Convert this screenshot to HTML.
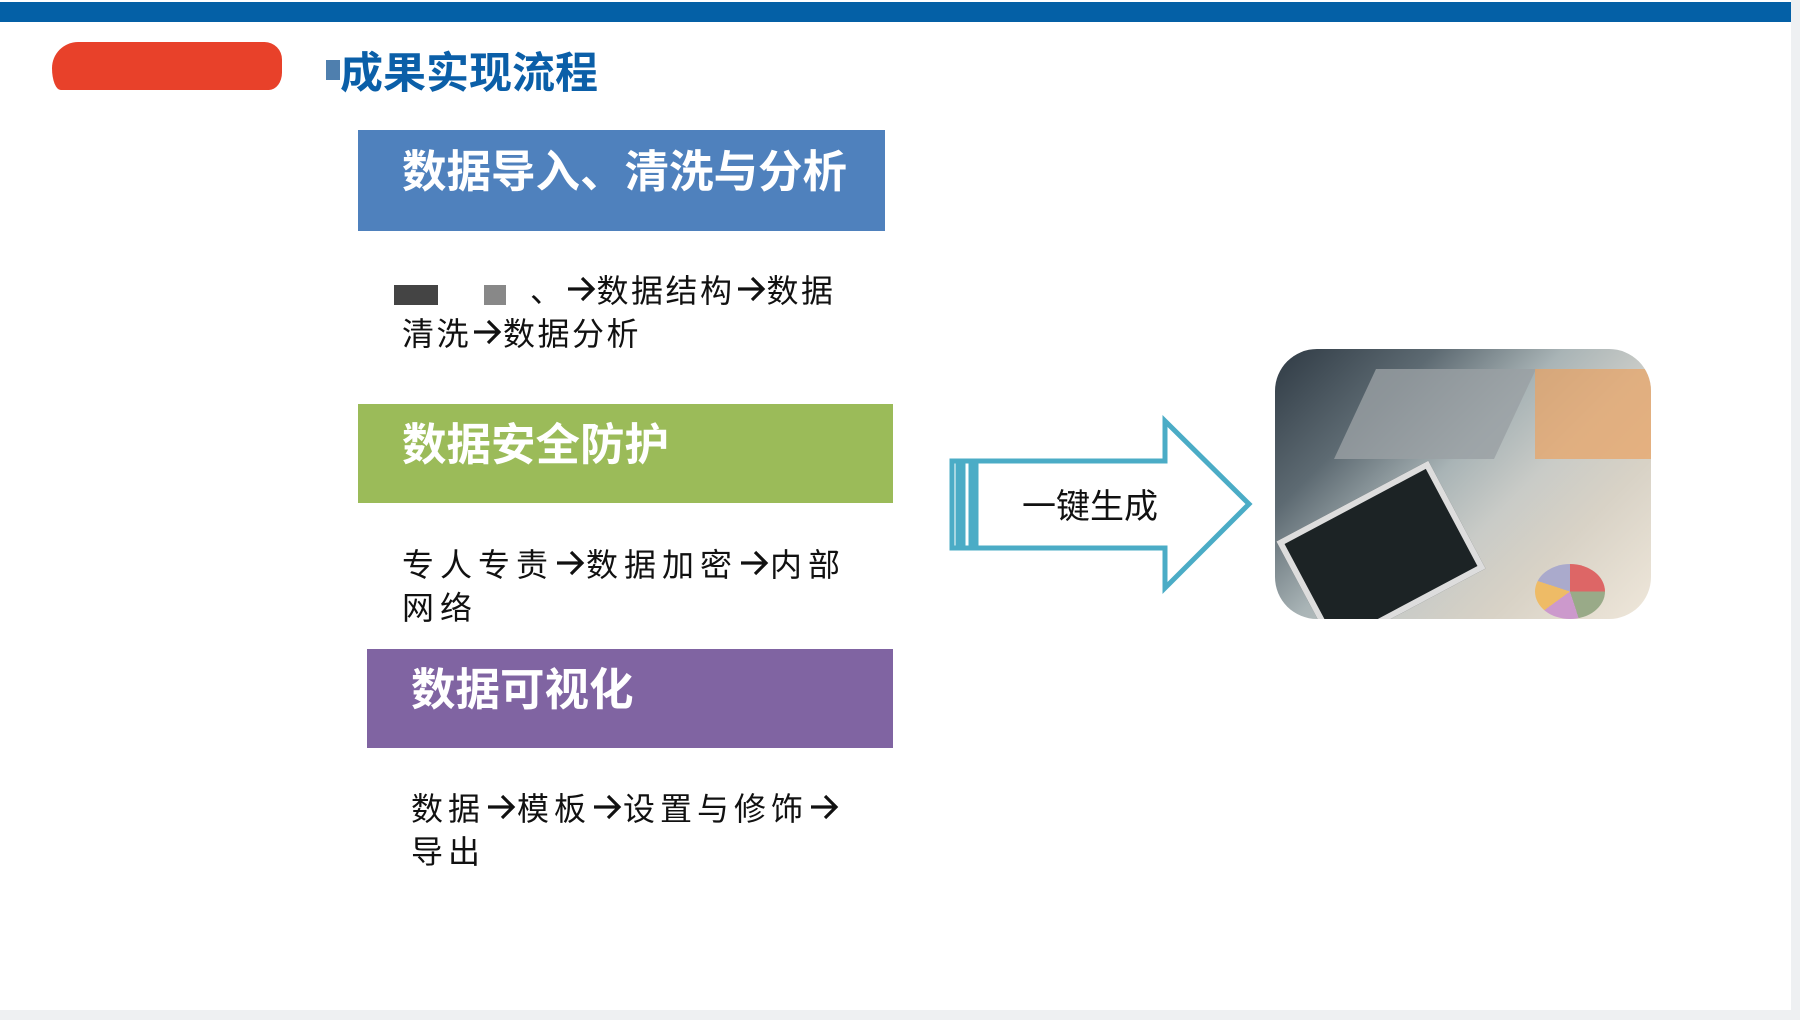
<!DOCTYPE html>
<html><head><meta charset="utf-8"><style>
*{margin:0;padding:0}
body{width:1800px;height:1020px;background:#fff;position:relative;overflow:hidden;font-family:"Liberation Sans","Noto Sans CJK SC",sans-serif}
.a{position:absolute;white-space:nowrap}
.box{position:absolute}
.bt{position:absolute;color:#fff;font-weight:bold;font-size:44.5px;line-height:1;font-family:"Noto Sans CJK SC",sans-serif}
.t{position:absolute;color:#111;font-size:32px;line-height:43px;white-space:nowrap;font-family:"Noto Sans CJK SC",sans-serif}
.ar{display:inline-block;width:1em;height:1em;vertical-align:-0.1em}
</style></head><body>
<svg width="0" height="0" style="position:absolute"><defs><symbol id="ar" viewBox="0 0 32 32"><path d="M3 16H28M17 5L28 16L17 27" fill="none" stroke="#111" stroke-width="3.2"/></symbol></defs></svg>
<div class="box" style="left:0;top:2px;width:1800px;height:20px;background:#0460a6"></div>
<div class="box" style="left:1791px;top:0;width:9px;height:1020px;background:#eef0f2"></div>
<div class="box" style="left:0;top:1010px;width:1800px;height:10px;background:#eef0f2"></div>
<div class="box" style="left:52px;top:42px;width:230px;height:48px;background:#e8412a;border-radius:30px 20px 15px 10px/30px 20px 20px 25px"></div>
<div class="box" style="left:326px;top:60px;width:14px;height:20px;background:#4f7fae"></div>
<div class="a" style="left:340px;top:40px;font-size:43px;font-weight:bold;color:#0b5fa8;font-family:'Noto Sans CJK SC',sans-serif;line-height:60px">成果实现流程</div>

<div class="box" style="left:358px;top:130px;width:527px;height:101px;background:#4f81bd"></div>
<div class="bt" style="left:402px;top:146px">数据导入、清洗与分析</div>
<div class="box" style="left:394px;top:285px;width:44px;height:20px;background:#444"></div>
<div class="box" style="left:484px;top:285px;width:22px;height:20px;background:#888"></div>
<div class="t" style="left:402px;top:268px;letter-spacing:2.5px"><span style="margin-left:128px">、<svg class="ar"><use href="#ar"/></svg>数据结构<svg class="ar"><use href="#ar"/></svg>数据</span><br>清洗<svg class="ar"><use href="#ar"/></svg>数据分析</div>

<div class="box" style="left:358px;top:404px;width:535px;height:99px;background:#9bbb59"></div>
<div class="bt" style="left:402px;top:419px">数据安全防护</div>
<div class="t" style="left:402px;top:542px;letter-spacing:6px">专人专责<svg class="ar"><use href="#ar"/></svg>数据加密<svg class="ar"><use href="#ar"/></svg>内部<br>网络</div>

<div class="box" style="left:367px;top:649px;width:526px;height:99px;background:#8064a2"></div>
<div class="bt" style="left:411px;top:664px">数据可视化</div>
<div class="t" style="left:411px;top:786px;letter-spacing:5px">数据<svg class="ar"><use href="#ar"/></svg>模板<svg class="ar"><use href="#ar"/></svg>设置与修饰<svg class="ar"><use href="#ar"/></svg><br>导出</div>

<svg class="box" style="left:940px;top:410px" width="320" height="190" viewBox="940 410 320 190">
<g fill="none" stroke="#4bacc6" stroke-width="5" stroke-linejoin="miter">
<rect x="952" y="461" width="6" height="87"/>
<rect x="963" y="461" width="8" height="87"/>
<path d="M976 461 H1165 V421 L1249 504 L1165 588 V548 H976 Z"/>
</g>
</svg>
<div class="a" style="left:1022px;top:479px;font-size:34px;color:#111;font-family:'Noto Sans CJK SC',sans-serif">一键生成</div>

<div class="box" style="left:1275px;top:349px;width:376px;height:270px;border-radius:42px;overflow:hidden;background:linear-gradient(135deg,#2f3a44 0%,#5d6a72 25%,#a9b4b6 45%,#c9cbc7 60%,#d8d2c6 75%,#efe7da 100%)">
<div class="box" style="left:80px;top:20px;width:160px;height:90px;background:#9aa0a4;transform:skewX(-25deg);opacity:.8"></div>
<div class="box" style="left:20px;top:145px;width:160px;height:110px;background:#1c2325;border:6px solid #ddd;transform:rotate(-28deg)"></div>
<div class="box" style="left:260px;top:20px;width:116px;height:90px;background:#e9a263;opacity:.7"></div>
<div class="box" style="left:260px;top:215px;width:70px;height:55px;border-radius:50%;background:conic-gradient(#d66 0 25%,#9a8 0 45%,#c9c 0 65%,#eb6 0 80%,#aac 0)"></div>
</div>
</body></html>
